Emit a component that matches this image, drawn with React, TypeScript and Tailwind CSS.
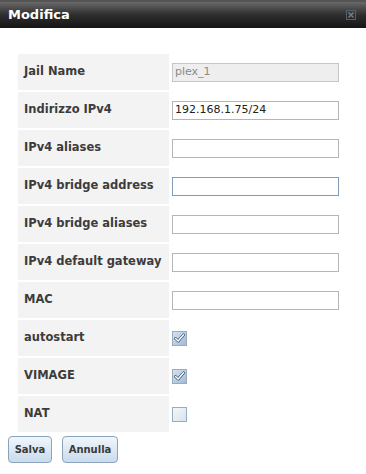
import type React from "react"

type Field = {
  label: string
  kind: "text" | "check"
  value?: string
  checked?: boolean
  disabled?: boolean
  focused?: boolean
}

const fields: Field[] = [
  { label: "Jail Name", kind: "text", value: "plex_1", disabled: true },
  { label: "Indirizzo IPv4", kind: "text", value: "192.168.1.75/24" },
  { label: "IPv4 aliases", kind: "text", value: "" },
  { label: "IPv4 bridge address", kind: "text", value: "", focused: true },
  { label: "IPv4 bridge aliases", kind: "text", value: "" },
  { label: "IPv4 default gateway", kind: "text", value: "" },
  { label: "MAC", kind: "text", value: "" },
  { label: "autostart", kind: "check", checked: true },
  { label: "VIMAGE", kind: "check", checked: true },
  { label: "NAT", kind: "check", checked: false },
]

const CheckBox = ({ checked }: { checked?: boolean }) => (
  <div
    className={
      "w-[15px] h-[15px] border border-[#9aabbd] flex items-center justify-center bg-gradient-to-br " +
      (checked ? "from-[#d6e3f0] to-[#9fbad5]" : "from-[#f4f7fa] to-[#d7e2ee]")
    }
  >
    {checked && (
      <svg width="11" height="10" viewBox="0 0 11 10">
        <path d="M1.5 5.5 L4.2 8 L9.5 1.8" fill="none" stroke="#355575" strokeWidth="2.8" strokeLinecap="round" strokeLinejoin="round" />
        <path d="M1.5 5.5 L4.2 8 L9.5 1.8" fill="none" stroke="#ffffff" strokeWidth="1.4" strokeLinecap="round" strokeLinejoin="round" />
      </svg>
    )}
  </div>
)

const App: React.FC = () => {
  return (
    <div className="w-[366px] h-[474px] bg-white font-['DejaVu_Sans',Verdana,sans-serif] text-[#333]">
      <div className="h-[28px] bg-gradient-to-b from-[#6a6a6a] via-[#2e2e2e] to-[#151515] border-t-2 border-[#555] flex items-center justify-between pl-[8px] pr-[10px]">
        <span className="text-white font-bold text-[13px]">Modifica</span>
        <svg width="10" height="10" viewBox="0 0 10 10">
          <rect x="0.5" y="0.5" width="9" height="9" fill="none" stroke="#56606b" />
          <path d="M2.5 2.5 L7.5 7.5 M7.5 2.5 L2.5 7.5" stroke="#6f7b88" strokeWidth="1.6" />
        </svg>
      </div>

      <div className="pt-[26px] pl-[18px] flex flex-col gap-[2px]">
        {fields.map((f) => (
          <div key={f.label} className="flex h-[36px]">
            <div className="w-[151px] bg-[#f3f3f3] flex items-center pl-[6px] text-[11.5px] font-bold text-[#3c3c3c] whitespace-nowrap">
              {f.label}
            </div>
            <div className="flex items-center pl-[3px]">
              {f.kind === "text" ? (
                <div
                  className={
                    "w-[167px] h-[19px] border flex items-center px-[2px] text-[11px] " +
                    (f.disabled
                      ? "bg-[#eeeeee] border-[#c6c6c6] text-[#8a8a8a]"
                      : f.focused
                        ? "bg-white border-[#7f9db9] text-[#222]"
                        : "bg-white border-[#b5b5b5] text-[#222]")
                  }
                >
                  {f.value}
                </div>
              ) : (
                <CheckBox checked={f.checked} />
              )}
            </div>
          </div>
        ))}
      </div>

      <div className="flex gap-[10px] pl-[8px] pt-[4px]">
        <button className="w-[44px] h-[27px] rounded-[4px] border border-[#8ca3bd] bg-gradient-to-b from-[#f1f6fb] to-[#c9dbec] text-[10px] font-bold text-[#3a3a3a]">
          Salva
        </button>
        <button className="w-[56px] h-[27px] rounded-[4px] border border-[#8ca3bd] bg-gradient-to-b from-[#f1f6fb] to-[#c9dbec] text-[10px] font-bold text-[#3a3a3a]">
          Annulla
        </button>
      </div>
    </div>
  )
}

export default App
